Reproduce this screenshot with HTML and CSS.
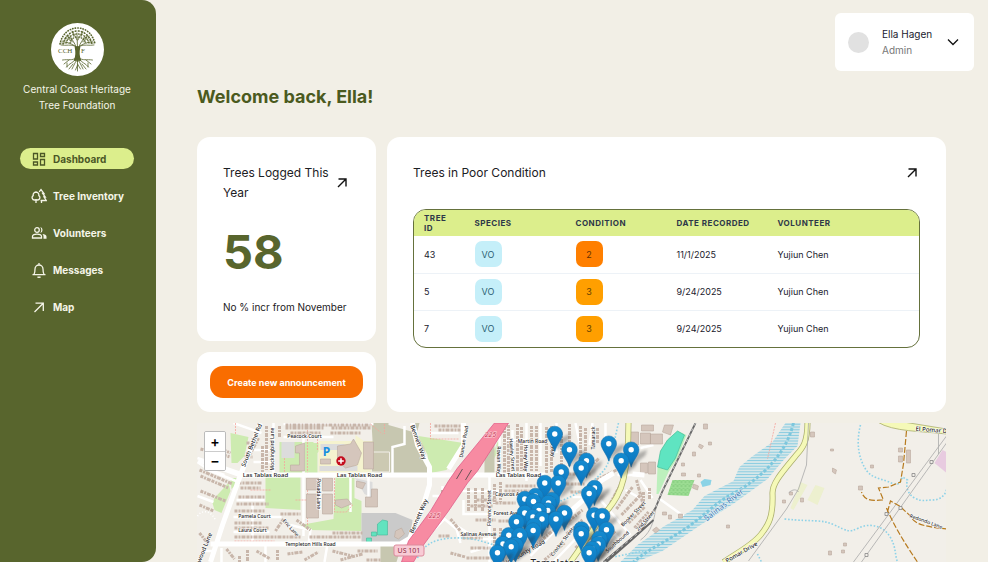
FILE: index.html
```html
<!DOCTYPE html>
<html lang="en">
<head>
<meta charset="utf-8">
<meta name="viewport" content="width=device-width, initial-scale=1">
<title>Dashboard</title>
<link rel="stylesheet" href="styles.css">
</head>
<body>
<div class="app">
  <aside class="sidebar">
    <div class="brand">
      <svg class="brand-logo" viewBox="0 0 53 53" aria-hidden="true">
        <circle cx="26.500" cy="26.500" r="26.500" fill="#fff"/>
        <g fill="none" stroke="#58652d" stroke-linecap="round">
          <path d="M24 37c1.500-3 1.600-9 .8-13M29 37c-1.500-3-1.600-9-.8-13M26.500 24v14" stroke-width="2.200"/>
          <path d="M26.500 25L26 10M25 24c-1-4-4-7-6-11M28 24c1-4 4-7 6-11M25 24c-4-4-9-4-14-6M28 24c4-4 9-4 14-6M24 23c-4-2-9 0-14-1M29 23c4-2 9 0 14-1M21 16l-6-3M32 16l6-3M26 17l-4-8M27 17l4-8" stroke-width=".8"/>
          <path d="M17 20l-4-5M36 20l4-5M20 19l-3-7M33 19l3-7M23 14l-2-6M30 14l2-6M14 20l-5 0M39 20l5 0M22 19l-7-4M31 19l7-4" stroke-width=".6"/>
          <path d="M9 21c2-10 9-16 17.500-16S42 11 44 21" stroke-width="1.600" stroke-dasharray=".4 2.200"/>
          <path d="M12 21c2-8 8-13 14.500-13S39 13 41 21" stroke-width="1.500" stroke-dasharray=".8 2.300"/>
          <path d="M15 20c2-6 6-9 11.500-9S36 14 38 20" stroke-width="1.400" stroke-dasharray=".5 2.300"/>
          <path d="M19 20c1-4 4-6 7.500-6s7 2 8 6" stroke-width="1.300" stroke-dasharray=".6 2.200"/>
          <path d="M24.500 35c-3 3-7 1-13 2M24.500 36c-2 4-6 4-9 8M26 36c-2 4-3 6-5 10M26.500 36v12M27 36c2 4 3 6 5 10M28.500 36c2 4 6 4 9 8M28.500 35c3 3 7 1 13 2M18 37l-5 4M35 37l5 4M22 41l-4 5M31 41l4 5M26.500 42l-2 5M26.500 41l3 5M16 40v4M37 40v4" stroke-width=".8"/>
        </g>
        <g class="logo-letters"><text x="7" y="30">CCH</text><text x="30" y="30">F</text></g>
      </svg>
      <p class="brand-name">Central Coast Heritage Tree Foundation</p>
    </div>
    <nav class="nav">
      <a class="nav-item nav-item-active" href="#">
        <svg viewBox="0 0 16 16" aria-hidden="true"><path d="M2.500 2.500h4v5.500h-4zM9.500 2.500h4v3h-4zM9.500 8.500h4v5.500h-4zM2.500 11h4v3h-4z"/></svg>
        Dashboard</a>
      <a class="nav-item" href="#">
        <svg viewBox="0 0 16 16" aria-hidden="true"><path d="M5 15v-4M5 12H3.500a2.400 2.400 0 0 1-1.300-4.400A3 3 0 0 1 5 4a3 3 0 0 1 2.800 3.600A2.400 2.400 0 0 1 6.500 12H5M8.200 3.800L10 1.500l3 4h-1.300l2.600 3.500H13l2.300 3.500H9.500M10.500 12.500V15"/></svg>
        Tree Inventory</a>
      <a class="nav-item" href="#">
        <svg viewBox="0 0 16 16" aria-hidden="true"><circle cx="6" cy="5" r="2.300"/><path d="M1.500 13v-1.500C1.500 9.800 4 9.200 6 9.200s4.500.6 4.500 2.300V13z"/><path class="solid" d="M9.300 2.100a3 3 0 0 1 0 5.800c1.300-1.700 1.300-4.100 0-5.800zM11.500 8.900c2 .2 4 1 4 2.700v2.100h-3v-2.100c0-1-.3-1.900-1-2.700z"/></svg>
        Volunteers</a>
      <a class="nav-item" href="#">
        <svg viewBox="0 0 16 16" aria-hidden="true"><path d="M1.500 12.700h13M3 12.500c.8-1.500 1-2.800 1-5.500a4 4 0 0 1 8 0c0 2.700.2 4 1 5.500M8 1v2M6.500 14.700c.8.900 2.200.9 3 0"/></svg>
        Messages</a>
      <a class="nav-item" href="#">
        <svg viewBox="0 0 16 16" aria-hidden="true"><path d="M3.500 13L12 4.500M4.500 4.200h7.800V12"/></svg>
        Map</a>
    </nav>
  </aside>

  <main class="main">
    <header class="topbar">
      <button class="user" type="button">
        <span class="avatar"></span>
        <span class="user-text"><span class="user-name">Ella Hagen</span><span class="user-role">Admin</span></span>
        <svg class="chevron" viewBox="0 0 14 14" aria-hidden="true"><path d="M2 4.500l5 5 5-5"/></svg>
      </button>
    </header>

    <div class="content">
      <h1 class="welcome">Welcome back, Ella!</h1>
      <div class="cards">
        <div class="column">
          <section class="card stat">
            <div class="card-head">
              <h2 class="card-title">Trees Logged This Year</h2>
              <a class="card-link" href="#" aria-label="Open trees logged"><svg viewBox="0 0 12 12"><path d="M2 10l8-8M2.500 2H10v7.500"/></svg></a>
            </div>
            <p class="stat-value">58</p>
            <p class="stat-note">No % incr from November</p>
          </section>
          <section class="card action"><button class="announce" type="button">Create new announcement</button></section>
        </div>
        <section class="card poor">
          <div class="card-head">
            <h2 class="card-title">Trees in Poor Condition</h2>
            <a class="card-link" href="#" aria-label="Open trees in poor condition"><svg viewBox="0 0 12 12"><path d="M2 10l8-8M2.500 2H10v7.500"/></svg></a>
          </div>
          <div class="table-frame">
            <table>
              <thead><tr><th class="col-id">Tree ID</th><th class="col-mid">Species</th><th class="col-mid">Condition</th><th class="col-mid">Date Recorded</th><th>Volunteer</th></tr></thead>
              <tbody>
                <tr><td>43</td><td><span class="tag species">VO</span></td><td><span class="tag level-2">2</span></td><td>11/1/2025</td><td>Yujiun Chen</td></tr>
                <tr><td>5</td><td><span class="tag species">VO</span></td><td><span class="tag level-3">3</span></td><td>9/24/2025</td><td>Yujiun Chen</td></tr>
                <tr><td>7</td><td><span class="tag species">VO</span></td><td><span class="tag level-3">3</span></td><td>9/24/2025</td><td>Yujiun Chen</td></tr>
              </tbody>
            </table>
          </div>
        </section>
      </div>

      <section class="map" aria-label="Tree map">
        <svg class="map-canvas" viewBox="196 423 750 139" preserveAspectRatio="xMidYMin slice">
          <defs>
            <pattern id="wet" width="11" height="2.800" patternUnits="userSpaceOnUse"><path d="M0 1.400h11" stroke="#86cbe0" stroke-width="1.200"/></pattern>
            <pattern id="orchard" width="4" height="4" patternUnits="userSpaceOnUse"><rect width="4" height="4" fill="#9bdc92"/><path d="M1 1v2M3 0v1" stroke="#76c270" stroke-width=".8"/></pattern>
            <linearGradient id="pin-fill" x1="0" y1="0" x2="0" y2="1"><stop offset="0" stop-color="#148bd0"/><stop offset="1" stop-color="#0a74bd"/></linearGradient>
            <filter id="soft" x="-50%" y="-50%" width="200%" height="200%"><feGaussianBlur stdDeviation="1.500"/></filter>
            <g id="pin">
              <path d="M0 17L5 4 16 0 14 6z" fill="#333" opacity=".35" filter="url(#soft)"/>
              <path d="M0 17.500C-2 10.500-7.800 5-7.800 0a7.800 7.800 0 0 1 15.600 0C7.800 5 2 10.500 0 17.500z" fill="url(#pin-fill)" stroke="#1a6fa6" stroke-width=".5"/>
              <circle r="2.700" fill="#fff"/>
            </g>
            <path id="pylon" d="M-1.500-1.500h3v3h-3z" fill="#f2efe9" stroke="#888" stroke-width=".8"/>
          </defs>
          <rect x="196" y="423" width="750" height="139" fill="#f2efe9"/>

          <!-- land use -->
          <g fill="#cdebb0">
            <path d="M230 433l18 4-4 19-7 7h-6zM214 498l14-15 2 8-9 22-7-3-2-7zM230 478h6v6l-5 5zM265 477h35v33l-35-2zM335 477h19v21l7 3v30l-53-1-8-5 33-6zM311 443h15l-9 10v20h-9zM418 436l45 7-4 8-13 19-16 3-3-18zM279 442h34v31h-34z"/>
            <path d="M498 440l2 6-8 16v11h-8z" opacity=".9"/>
          </g>
          <path d="M318 441h57v32h-57zM355 435l11 8v29l-11-2z" fill="#f5f3cf"/>
          <path d="M281 442h13v16h-13zM320 444h24v6h-24zM319 466h38v5h-38zM354 478l18 4v16l-8-4-8-14z" fill="#dcdcdc"/>
          <path d="M371 423h17v2l28 8 8 15 4 25h-54zM484 452l10-8v29h-10zM380 545l22-2-6 19h-16zM414 423h5l-2 8z" fill="#c7c7b0"/>
          <path d="M371 452h18v20h-18z" fill="#ccc9b2" stroke="#f2efe9"/>
          <path d="M361 513h34l17 7-3 20-2 2h-46z" fill="#cacaca"/>
          <path d="M377 524l5-4 5 1v14h-10zM366 538h5v4h-5zM371 532h5v4h-5z" fill="#61e3bf" stroke="#45b998" stroke-width=".6"/>
          <path d="M677 431l9 4-9 23-9 14-10 22h-2l1-27 3-16 7-11z" fill="#bdf0bd"/>
          <path d="M677 431l7 4-9 23-8 12-10-3 3-16 7-11z" fill="#5fe4c1" stroke="#48bd99" stroke-width=".7"/>
          <path d="M672 480h22l-6 16-21-1z" fill="url(#orchard)"/>
          <path d="M790 508l10-26 7 3-14 25zM807 500l8-15 9 3-7 17z" fill="#edf0cf"/>
          <path d="M942 450l4 2v21l-12-10z" fill="#e8cbe0"/>
          <path d="M785 423h15l-3 23-13 13-17 20-33 24-34 22-38 26-26 11h-16l17-17 27-19 28-16 12-14 29-15 6-14 12-10 21-15z" fill="#c8e6ee" opacity=".35"/>
          <path d="M785 423h15l-3 23-13 13-17 20-33 24-34 22-38 26-26 11h-16l17-17 27-19 28-16 12-14 29-15 6-14 12-10 21-15z" fill="url(#wet)"/>
          <path d="M793 423c-5 20-14 32-24 43s-24 21-39 29-30 24-47 35-35 19-50 32" fill="none" stroke="#7dc7dd" stroke-width="3" stroke-dasharray="3 2"/>
          <path d="M700 482l4-3 7 1-1 5-8 2z" fill="#8bd3e6"/>

          <!-- minor streets -->
          <g class="street">
            <path d="M197 462l12 8 15 5M208 470l30 12M197 458l46 16M197 496l16 6M233 423l28 10M253 450h20M253 462h20M236 500h28M233 517h48M233 532h36M221 548v14M265 544v18M252 503v38M273 423v52M303 436v100M319 480v30M283 424h90M283 437h50M290 525l20 5-2 14M327 544l-3 18M350 478v34M368 477v30M203 551h10"/>
            <path d="M392 473V447l12-3V426M430 433h28M442 486v10h-10M430 533l14-14 12 10 4 14M455 525l22 14h16M463 500v14h40M489 477v85M499 423v52M512 430v45M526 423v58M540 423v43M462 491h40M465 514h32M502 440h30M502 423l-3 12M556 423v30M575 423l4 20M592 423l-3 22M605 423v20M470 552l20-6 12 4M550 480h20M572 497h20M590 510l30 30M600 500l30 35M640 440h12M625 490l18 10M560 520l50 32M575 510l-45 46M595 518l-42 44M640 448l13-3M640 480l12 18M658 498l25 18M617 475h24"/>
          </g>
          <g class="path">
            <path d="M307 424v106M284 458v14M317 436v14M334 478v34l12 0 6-7-8-3M430 423v16h28M370 424l12 10M295 500h12M384 424v10M235 423v12M775 423l-4 18-4 18M250 490h20M234 541h40"/>
          </g>
          <!-- houses in rows along the streets -->
          <g class="houses">
            <path d="M200 449l30 8M199 470l33 14M200 476l28 12M212 445l18 8M200 491l25 10M199 505l14 6M258 438l-14 27M266 426v44M279 426v12M262 446v26M285 428h38M331 428h40M290 433h30M330 433h30M285 425h85M238 483h24M240 488h20M238 497h26M236 504h32M234 511h30M234 523h28M234 528h34M234 537h66M280 514h20M283 519l-8 12M296 520l14 10M309 537h52M332 533h30M239 556v6M247 550v12M256 551l14 8M277 550v10M287 554l15-2M304 560l14-8M332 551l20 5M340 560l22-6M357 551h20M366 560h14M226 549l8 10M199 533l8 10M246 443h6M244 457h8"/>
            <path d="M434 426h26M438 430h22M468 488v24M475 488v24M482 488v24M470 506h22M442 490v14M438 536h12M450 519l10 12M462 538h20M470 548h20M466 558h28M450 553l15 4M504 427v48M508 425v47M517 424v48M521 427v44M531 426v45M536 426v45M546 427v46M551 426v46M561 432v38M569 424v42M580 426v38M585 428v28M597 428v16M494 484v20M500 482v20M505 486h30M504 491h25M495 503h20M498 521h17M494 528v34M500 528v20M476 500h20M475 520h20M581 474l18-16M558 484h26M570 492h22M596 480l20-10M560 474h30M590 540l17-16M584 534l17-16M598 547l17-16M575 548l13-13M562 526l20-16M566 534l16-14M628 523l16-16M621 515l21-22M616 509l16-22M610 503l12-22M634 528l14-16M544 560l20-17M534 547l20-18M649 488v12M643 492v13M636 480l6 22"/>
          </g>
          <g class="building">
            <path d="M295 446l9-3v28h-14v-6h9v-12h-4zM306 478h12v12h-12zM322 478h10v13h-10zM306 494h12v24h-12zM322 494h10v20h-10zM337 446l13-2 3-5 8 14-4 12-12 3-8-7zM320 459h10v5h-10zM363 442h10v27h-10zM356 481l9 2-3 6-6-2zM371 489h6v18h-12v-10h6zM335 500l12-1 4 5-10 4-6-3zM395 531l6-3 3 6-6 5-4-2zM640 433h10v11h-10zM650 434h12v10h-12zM640 463h7v10h-7zM648 462h7v12h-7zM626 432h12v13h-12zM641 425h12v6h-12zM664 425h9l-3 10-8-3z"/>
            <path d="M692 452h3v4h-3zM699 444l4 2-2 3-3-2zM708 442h3v3h-3zM681 463h3v3h-3zM681 473h4v3h-4zM697 474h3v3h-3zM693 484l5 2-1 4-5-2zM662 512h4v3h-4zM668 515h3v4h-3zM678 514h4v4h-4zM652 530l4-3 3 3-4 3zM810 432h4v5h-4zM830 449h3v2h-3zM832 468l4 2-1 4-3-2zM870 465h3v3h-3zM898 448h4v4h-4zM898 456h4v6h-4zM906 450h4v13h-4zM858 486h4v4h-4zM782 500h3v3h-3zM789 492h3v3h-3zM800 498h3v4h-3zM828 551h3v4h-3zM843 543h3v3h-3zM841 550h3v3h-3zM726 525h3v3h-3zM703 424h4v5h-4z"/>
          </g>

          <!-- waterways -->
          <g class="creek">
            <path d="M417 558c6-13 16-19 35-20s33 4 47 9M618 423c-5 20-7 40-17 50s-24 23-44 29M643 551l-30 6M860 425c-5 20-1 34 5 44s18 10 26 14 9-2 11-6l5 3c-2 6 0 14 7 18s12 2 18 2 12-3 14-10 4-6 10-7M784 519c30 3 37 0 50 6s14 8 24 3 24-3 31 8 5 18 8 26M757 554l4 8"/>
          </g>
          <path d="M197 516c6-8 14-4 18 4" fill="none" stroke="#fff" stroke-width="1.500" stroke-dasharray="1 2"/>

          <!-- main roads -->
          <g class="road">
            <path d="M260 423l-20 52-18 50-12 37M240 475h305M240 475l-42-15M210 544h190l10-6M412 423l5 22 12 22v18l-6 20-16 39M463 423v22l-15 24M613 473l-13 8-14 16-30 27-24 13M632 474l12 1"/>
          </g>
          <path d="M494 423h14l-31 48-10 12-19 28-25 34-10 17h-12l7-21 22-30 18-30 9-13z" fill="#f78ba2" stroke="#e0608a" stroke-width=".8"/>
          <path d="M456 479l6-10M465 480l6-10" stroke="#444" stroke-width=".8"/>
          <g class="yellow-edge"><path d="M628 423c0 30-2 43-5 56s-8 22-20 36l-33 47M807 423c0 21-6 26-12 33-14 17-23 27-23 37 1 24-4 32-12 42s-22 17-37 27"/></g>
          <g class="yellow-fill"><path d="M628 423c0 30-2 43-5 56s-8 22-20 36l-33 47M807 423c0 21-6 26-12 33-14 17-23 27-23 37 1 24-4 32-12 42s-22 17-37 27"/></g>
          <path d="M877 422l26 0 43 7v5c-25-3-53-2-69-12z" fill="#f5f9b8" stroke="#a9ad6c" stroke-width=".8"/>
          <g class="thin">
            <path d="M808 423l-2 42-8 24-12 20-38 52M659 498c-6 8-2 30-19 42M853 562l93-126M861 562l85-119M938 434v20M788 493c4-4 8-4 10-1"/>
          </g>
          <path d="M695 423l-33 68-7 17-15 23-37 31M653 520l-22 20-25 22" fill="none" stroke="#666" stroke-width="1.800"/>
          <path d="M695 423l-33 68-7 17-15 23-37 31" fill="none" stroke="#ddd" stroke-width=".8" stroke-dasharray="3 3"/>
          <g class="track"><path d="M906 431l-3 33-3 18-12 5-10 1 5 12c-8 0-18 3-22-8M887 512l3-11 9 5 11 10c4 8 11 10 36 13M886 508c7 17 20 38 31 54"/></g>
          <use href="#pylon" x="913" y="475"/><use href="#pylon" x="931" y="462"/><use href="#pylon" x="886" y="514"/><use href="#pylon" x="900" y="508"/><use href="#pylon" x="866" y="555"/>

          <!-- labels -->
          <g class="label">
            <text x="304" y="438">Peacock Court</text>
            <text transform="translate(274 449) rotate(-90)">Mockingbird Lane</text>
            <text transform="translate(317 494) rotate(90)">Posada Lane</text>
            <text x="254" y="518">Pamela Court</text>
            <text x="252" y="532">Laura Court</text>
            <text transform="translate(289 529) rotate(48)">Eric Lane</text>
            <text x="310" y="546">Templeton Hills Road</text>
            <text transform="translate(465 442) rotate(-80)">Duncan Road</text>
            <text x="532" y="443">Martin Road</text>
            <text transform="translate(497 460) rotate(90)">Rowan Way</text>
            <text transform="translate(510 455) rotate(86)">Hawley Street</text>
            <text transform="translate(524 458) rotate(90)">Honey Way</text>
            <text transform="translate(551 444) rotate(90)">Sierra Way</text>
            <text x="514" y="496">Cayucos Avenue</text>
            <text x="510" y="515">Forest Avenue</text>
            <text transform="translate(491 508) rotate(-90)">Florence Street</text>
            <text x="478" y="536">Salinas Avenue</text>
            <text transform="translate(563 543) rotate(-52)">Crocker Street</text>
            <text transform="translate(595 438) rotate(-90)">Tamarack</text>
            <text transform="translate(634 515) rotate(-46)">Booker Street</text>
            <text transform="translate(646 522) rotate(-48)">2nd Street</text>
            <text transform="translate(618 543) rotate(-42)">Southbound</text>
            <text transform="translate(925 523) rotate(20)">Redondo Lane</text>
          </g>
          <g class="label label-main">
            <text transform="translate(253 446) rotate(-68)">South Bethel Rd</text>
            <text transform="translate(204 553) rotate(-68)">Lynwood Lane</text>
            <text x="265" y="477">Las Tablas Road</text>
            <text x="359" y="477">Las Tablas Road</text>
            <text x="518" y="477">Las Tablas Road</text>
            <text transform="translate(416 443) rotate(70)">Bennett Way</text>
            <text transform="translate(420 517) rotate(-66)">Bennett Way</text>
            <text transform="translate(524 555) rotate(-30)">Old County Road</text>
            <text transform="translate(742 554) rotate(-30)">Pomar Drive</text>
            <text x="932" y="432" transform="rotate(4 932 432)">El Pomar Dr</text>
          </g>
          <text class="river" transform="translate(725 507) rotate(-38)">Salinas River</text>
          <text class="town" x="555" y="567">Templeton</text>
          <text class="exit" x="490" y="437">225</text><text class="exit" x="434" y="518">225</text>
          <rect x="393.500" y="545" width="30" height="11" rx="2" fill="#f8cbd5" stroke="#dc8b9d"/>
          <text class="shield" x="408.500" y="553">US 101</text>
          <text class="parking" x="326" y="456">P</text>
          <circle cx="340.500" cy="461" r="4.700" fill="#c40d1e"/><path d="M340.500 458.200v5.600M337.700 461h5.600" stroke="#fff" stroke-width="1.500"/>

          <g class="pins">
            <use href="#pin" x="554.300" y="434"/><use href="#pin" x="608.300" y="443.700"/><use href="#pin" x="569" y="449.700"/><use href="#pin" x="630.700" y="449.700"/>
            <use href="#pin" x="586" y="460.700"/><use href="#pin" x="620.700" y="460.700"/><use href="#pin" x="580.700" y="468"/><use href="#pin" x="560.700" y="472"/>
            <use href="#pin" x="544.300" y="483"/><use href="#pin" x="557.700" y="483"/><use href="#pin" x="594" y="488"/><use href="#pin" x="588.700" y="493.500"/>
            <use href="#pin" x="535" y="496"/><use href="#pin" x="524.300" y="499"/><use href="#pin" x="551.500" y="500"/><use href="#pin" x="533" y="501.500"/>
            <use href="#pin" x="548" y="503"/><use href="#pin" x="547.300" y="510.500"/><use href="#pin" x="538.300" y="510.500"/><use href="#pin" x="524.300" y="513"/>
            <use href="#pin" x="564" y="513"/><use href="#pin" x="593.700" y="515.300"/><use href="#pin" x="601.700" y="516"/><use href="#pin" x="532.500" y="517"/>
            <use href="#pin" x="541.500" y="519"/><use href="#pin" x="555.500" y="519"/><use href="#pin" x="516" y="521.700"/><use href="#pin" x="533.500" y="526"/>
            <use href="#pin" x="606" y="529.700"/><use href="#pin" x="581" y="529.500"/><use href="#pin" x="532.700" y="530.500"/><use href="#pin" x="580.700" y="533.700"/>
            <use href="#pin" x="508.300" y="535.300"/><use href="#pin" x="519.300" y="535.300"/><use href="#pin" x="599" y="538.700"/><use href="#pin" x="502.500" y="544"/>
            <use href="#pin" x="597.700" y="544"/><use href="#pin" x="515" y="545"/><use href="#pin" x="510.700" y="546.700"/><use href="#pin" x="592" y="549"/>
            <use href="#pin" x="497" y="552.700"/><use href="#pin" x="588.700" y="552.700"/>
          </g>
        </svg>
        <div class="zoom"><button type="button" aria-label="Zoom in">+</button><button type="button" aria-label="Zoom out">−</button></div>
      </section>
    </div>
  </main>
</div>
</body>
</html>
```
FILE: styles.css
```css
* { box-sizing: border-box; }
body { margin: 0; background: #f2efe6; color: #1c2024; font-family: Inter, "Liberation Sans", sans-serif; font-size: 10px; }
h1, h2, p { margin: 0; }
button { font: inherit; border: 0; cursor: pointer; }
a { color: inherit; text-decoration: none; }

.app { display: flex; height: 100vh; overflow: hidden; }
.sidebar { flex: 0 0 156px; padding: 23px 22px 23px 20px; background: #58652d; color: #f5f5e8; border-radius: 0 14px 14px 0; }
.brand { display: flex; flex-direction: column; align-items: center; gap: 5px; }
.brand-logo { width: 53px; height: 53px; }
.logo-letters { font: 7px "Liberation Serif", serif; fill: #58652d; stroke: #fff; stroke-width: 1px; paint-order: stroke; }
.brand-name { text-align: center; line-height: 16px; }
.nav { display: flex; flex-direction: column; gap: 16px; margin-top: 35px; }
.nav-item { display: flex; align-items: center; gap: 6px; height: 21px; padding: 0 10px 0 11px; border-radius: 11px; font-size: 10px; font-weight: 700; white-space: nowrap; }
.nav-item svg { flex: none; width: 16px; height: 16px; fill: none; stroke: currentColor; stroke-width: 1.3; }
.nav-item .solid { fill: currentColor; stroke: none; }
.nav-item-active { background: #dcee8c; color: #4b5726; }

.main { flex: 1; min-width: 0; display: flex; flex-direction: column; }
.topbar { display: flex; justify-content: flex-end; padding: 13px 14px 0; }
.user { display: flex; align-items: center; width: 139px; height: 58px; padding: 0 14px 0 13px; background: #fff; border-radius: 6px; text-align: left; }
.avatar { width: 21px; height: 21px; margin-right: 13px; border-radius: 50%; background: #e1e1e1; }
.user-text { flex: 1; display: flex; flex-direction: column; line-height: 16px; }
.user-name { color: #1a1a2e; white-space: nowrap; }
.user-role { color: #777; }
.chevron { width: 14px; height: 14px; fill: none; stroke: #111; stroke-width: 1.3; }

.content { flex: 1; min-height: 0; display: flex; flex-direction: column; padding: 13px 42px 0 41px; }
.welcome { color: #4b5a1e; font-size: 18px; line-height: 26px; font-weight: 700; }
.cards { display: flex; gap: 11px; margin-top: 27px; }
.column { flex: 0 0 179px; min-width: 0; display: flex; flex-direction: column; gap: 11px; }
.card { background: #fff; border-radius: 13px; }
.stat { height: 204px; padding: 26px; }
.card-head { display: flex; align-items: center; justify-content: space-between; padding-right: 2px; }
.card-title { font-size: 12px; line-height: 20px; font-weight: 400; }
.stat .card-title { width: 110px; }
.card-link svg { display: block; width: 12px; height: 12px; fill: none; stroke: #111; stroke-width: 1.4; }
.stat-value { margin-top: 20px; color: #58652d; font-size: 47px; line-height: 58px; font-weight: 700; }
.stat-note { margin-top: 18px; line-height: 16px; white-space: nowrap; }
.action { padding: 14px 13px; }
.announce { width: 100%; height: 32px; padding: 0; border-radius: 13px; background: #f96d00; color: #fff; font-size: 9px; font-weight: 700; }
.poor { flex: 1; min-width: 0; padding: 26px; }

.table-frame { margin-top: 26px; overflow: hidden; border: 1px solid #65713c; border-radius: 13px; }
table { width: 100%; table-layout: fixed; border-collapse: collapse; }
th { height: 26px; padding: 0 10px; background: #dcee8c; color: #2d3748; text-align: left; text-transform: uppercase; font-size: 8px; line-height: 10px; font-weight: 700; letter-spacing: 0.5px; }
.col-id { width: 10%; }
.col-mid { width: 20%; }
td { height: 37px; padding: 0 10px; border-bottom: 1px solid #edf2f7; font-size: 9px; color: #1a202c; }
tr:last-child td { border-bottom: 0; }
.tag { display: flex; align-items: center; justify-content: center; width: 27px; height: 26px; border-radius: 7px; }
.species { background: #c5eff9; color: #2b5f72; }
.level-2 { background: #ff7f00; color: #653000; }
.level-3 { background: #ff9f00; color: #653f00; }

.map { position: relative; flex: 1; min-height: 0; margin-top: 11px; overflow: hidden; }
.map-canvas { display: block; width: 100%; height: 100%; }
.zoom { position: absolute; top: 8px; left: 7px; display: flex; flex-direction: column; border: 1px solid #bbb; border-radius: 2px; overflow: hidden; }
.zoom button { width: 20px; height: 19px; padding: 0; background: #fff; color: #000; font-size: 14px; line-height: 18px; font-weight: 600; }
.zoom button + button { border-top: 1px solid #ccc; }

.street { fill: none; stroke: #fff; stroke-width: 2.5; }
.road { fill: none; stroke: #fff; stroke-width: 5; stroke-linejoin: round; }
.path { fill: none; stroke: #f5a49d; stroke-width: 0.8; stroke-dasharray: 2 1; }
.houses { fill: none; stroke: #c8b6aa; stroke-width: 3; stroke-dasharray: 3 1 2 1 4 1; }
.building { fill: #d5c6bc; stroke: #bba99d; stroke-width: 0.6; }
.creek { fill: none; stroke: #8dd2e8; stroke-width: 1.6; stroke-dasharray: 1.6 1.8; }
.yellow-edge { fill: none; stroke: #a9ad6c; stroke-width: 6; }
.yellow-fill { fill: none; stroke: #f5f9b8; stroke-width: 4.5; }
.thin { fill: none; stroke: #aaa; stroke-width: 0.8; }
.track { fill: none; stroke: #b77a1e; stroke-width: 1.2; stroke-dasharray: 6 2; }
.label { font: 500 5px "Noto Sans", sans-serif; fill: #222; stroke: #fff; stroke-width: 1px; paint-order: stroke; text-anchor: middle; }
.label-main { font-size: 6px; }
.river { font: 8px "Noto Sans", sans-serif; fill: #3a74b0; stroke: #e8f4f8; stroke-width: 1px; paint-order: stroke; text-anchor: middle; }
.town { font: 10px "Noto Sans", sans-serif; fill: #222; stroke: #fff; stroke-width: 1px; paint-order: stroke; text-anchor: middle; }
.exit { font: italic 7px "Noto Sans", sans-serif; fill: #c9304f; stroke: #fbd9df; stroke-width: 1px; paint-order: stroke; text-anchor: middle; }
.shield { font: 7px "Noto Sans", sans-serif; fill: #8c2b43; text-anchor: middle; }
.parking { font: 700 12px "Noto Sans", sans-serif; fill: #1a8fe0; text-anchor: middle; }
```
